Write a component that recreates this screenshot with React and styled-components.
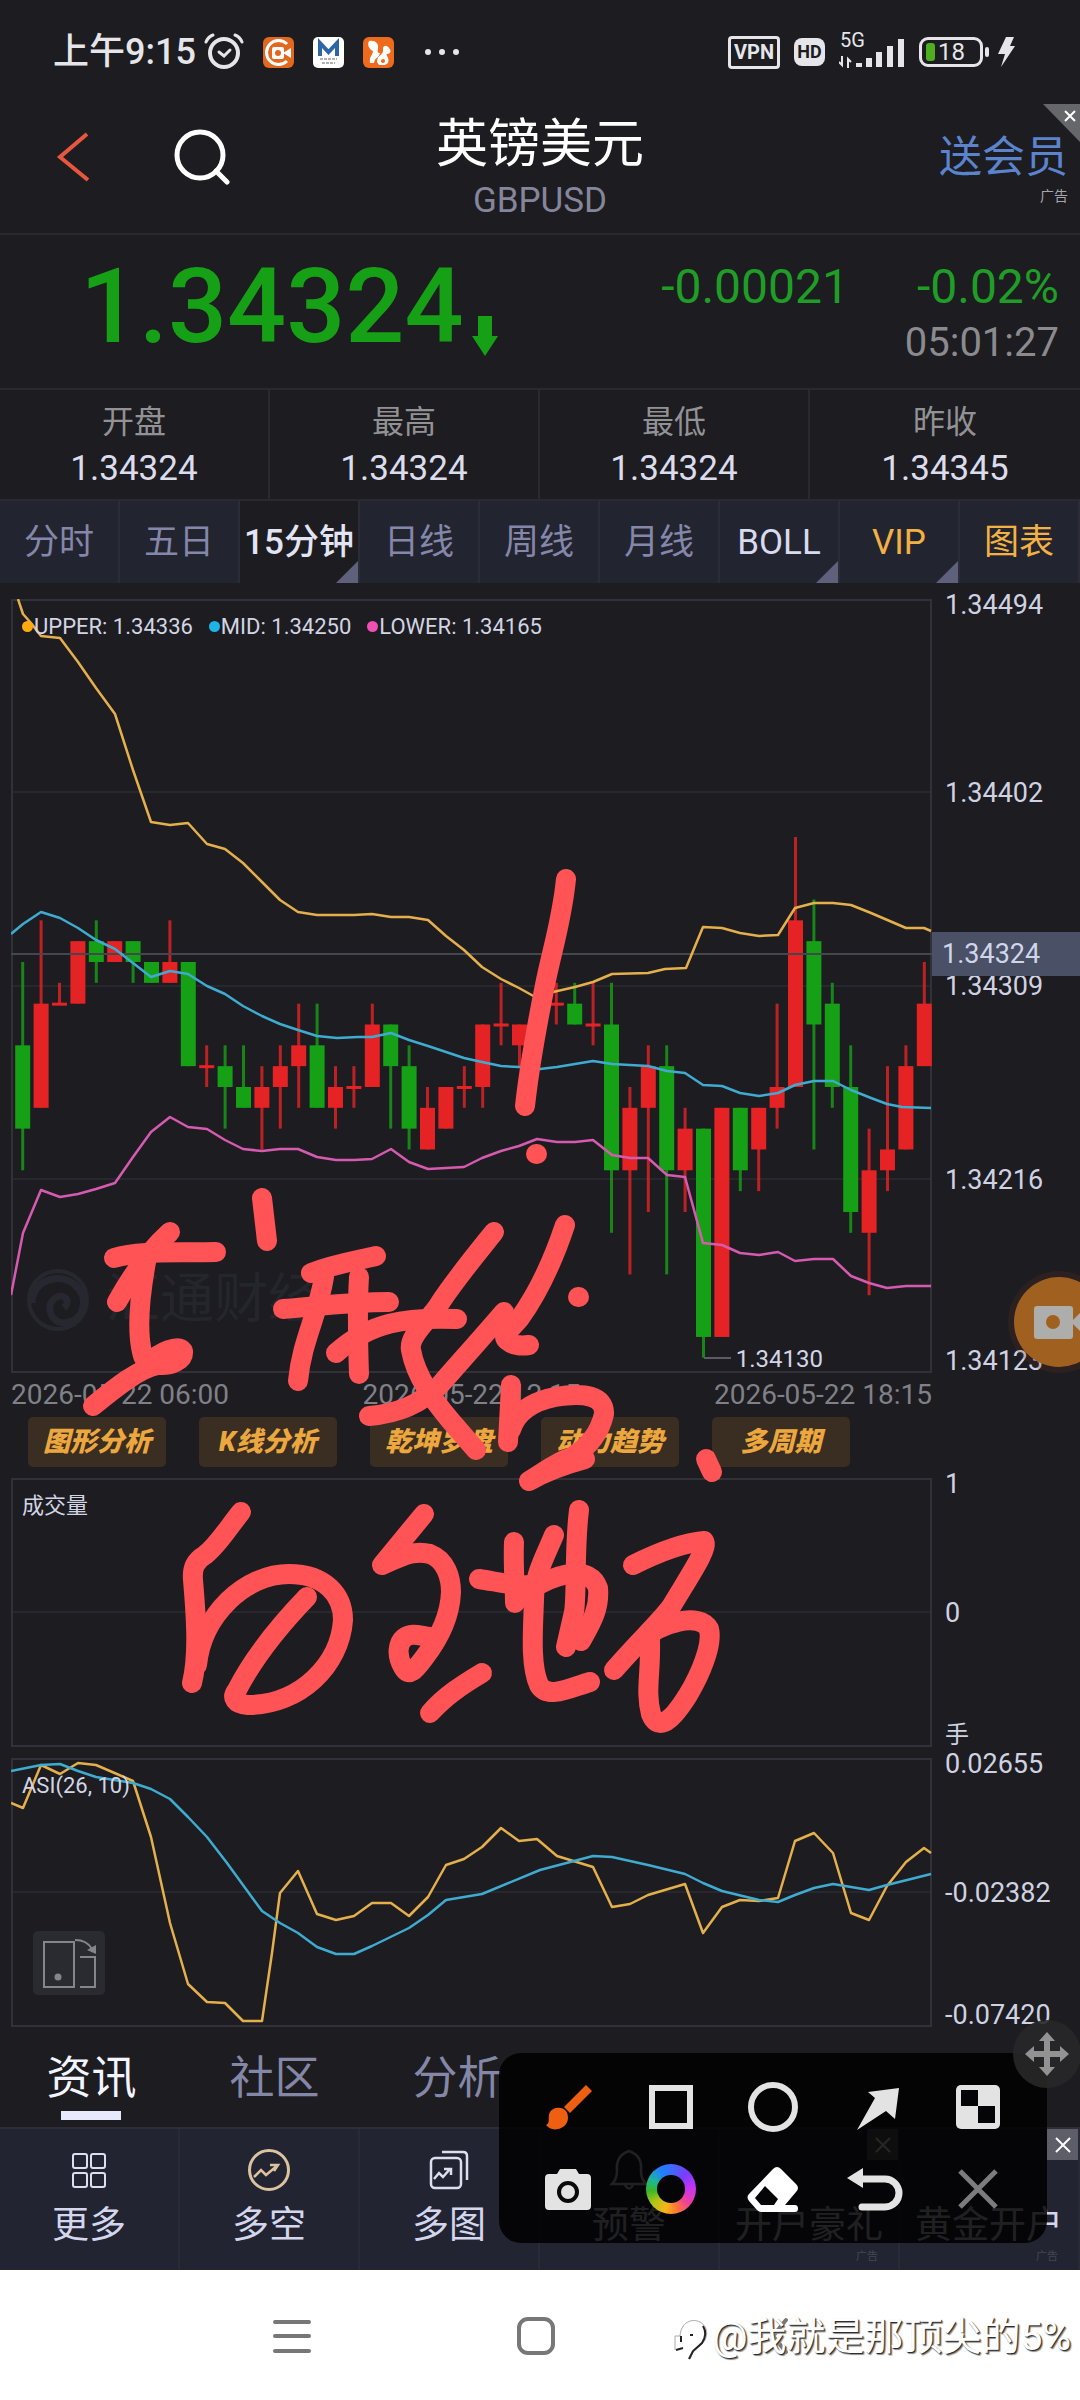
import React from 'react';
import styled, { createGlobalStyle, css } from 'styled-components';

const GlobalStyle = createGlobalStyle`
	* {
		box-sizing: border-box;
	}

	body {
		margin: 0;
		background: #fff;
		font-family: Roboto, "Noto Sans CJK SC", sans-serif;
	}

	button {
		margin: 0;
		padding: 0;
		border: none;
		background: none;
		color: inherit;
		font: inherit;
		cursor: pointer;
	}

	svg {
		display: block;
	}
`

const Page = styled.div`
	position: relative;
	overflow: hidden;
	background: #1c1c21;
	color: #d3d5e6;
`

/* status bar */

const StatusBar = styled.div`
	display: flex;
	align-items: center;
	justify-content: space-between;
	height: 104px;
	padding: 0 63px 0 53px;
	color: #e6e6ea;
`

const StatusGroup = styled.div`
	display: flex;
	align-items: center;
	gap: ${props => props.$gap}px;
`

const Clock = styled.span`
	margin-right: -11px;
	font-size: 36px;
	font-weight: 500;
	line-height: 40px;
`

const VpnBadge = styled.span`
	width: 52px;
	border: 3px solid #e6e6ea;
	border-radius: 4px;
	font-size: 20px;
	font-weight: 700;
	line-height: 27px;
	text-align: center;
`

const HdBadge = styled.span`
	width: 31px;
	border-radius: 8px;
	background: #e6e6ea;
	color: #1c1c21;
	font-size: 18px;
	font-weight: 700;
	line-height: 28px;
	text-align: center;
`

const Signal = styled.div`
	position: relative;
	width: 66px;
	height: 36px;

	span {
		position: absolute;
		top: -4px;
		left: 1px;
		font-size: 20px;
		line-height: 20px;
	}
`

const Battery = styled.div`
	position: relative;
	display: flex;
	align-items: center;
	width: 64px;
	height: 30px;
	padding-left: 4px;
	border: 3px solid #e6e6ea;
	border-radius: 9px;
	font-size: 24px;
	line-height: 24px;

	&::before {
		content: "";
		width: 9px;
		height: 18px;
		margin-right: 3px;
		border-radius: 3px;
		background: #4fae1e;
	}

	&::after {
		content: "";
		position: absolute;
		top: 7px;
		right: -9px;
		width: 4px;
		height: 10px;
		border-radius: 2px;
		background: #e6e6ea;
	}
`

/* header */

const TopBar = styled.header`
	position: relative;
	display: grid;
	grid-template-columns: 1fr auto 1fr;
	height: 131px;
	border-bottom: 2px solid #29292e;
`

const TopActions = styled.div`
	display: flex;
	align-items: center;
	gap: 82px;
	padding: 0 0 24px 56px;
`

const Title = styled.div`
	padding-top: 9px;
	text-align: center;

	h1 {
		margin: 0;
		color: #fff;
		font-size: 52px;
		font-weight: 400;
		line-height: 64px;
	}

	p {
		margin: 0;
		color: #85869b;
		font-size: 35px;
		line-height: 48px;
	}
`

const Member = styled.a`
	display: flex;
	flex-direction: column;
	align-items: flex-end;
	padding: 27px 12px 0 0;
	color: #5b84cc;
	font-size: 43px;
	line-height: 52px;
	text-decoration: none;

	small {
		margin-top: 5px;
		color: #a5a5ab;
		font-size: 14px;
		line-height: 16px;
	}
`

const CornerClose = styled.button`
	position: absolute;
	top: 0;
	right: 0;
`

/* quote */

const Quote = styled.section`
	display: flex;
	justify-content: space-between;
	height: 155px;
	padding: 0 21px 0 80px;
	border-bottom: 2px solid #29292e;
`

const Price = styled.div`
	display: flex;
	align-items: flex-start;
	color: #16a016;
	font-size: 104px;
	font-weight: 500;
	line-height: 144px;

	svg {
		margin: 81px 0 0 8px;
	}
`

const Changes = styled.div`
	display: grid;
	grid-template-columns: auto auto;
	grid-template-rows: 56px 56px;
	column-gap: 68px;
	justify-items: end;
	padding-top: 24px;
	color: #1f9d26;
	font-size: 48px;
	line-height: 56px;

	time {
		grid-column: 1 / -1;
		color: #8b8b8f;
		font-size: 40px;
	}
`

const Stats = styled.dl`
	display: grid;
	grid-template-columns: repeat(4, 1fr);
	height: 111px;
	margin: 0;
	border-bottom: 2px solid #29292e;
`

const Stat = styled.div`
	padding-top: 8px;
	border-right: 2px solid #29292e;
	text-align: center;

	&:last-child {
		border-right: none;
	}

	dt {
		color: #929295;
		font-size: 32px;
		line-height: 48px;
	}

	dd {
		margin: 0;
		color: #dcddec;
		font-size: 35px;
		line-height: 46px;
	}
`

/* period tabs */

const Periods = styled.nav`
	display: grid;
	grid-template-columns: repeat(9, 1fr);
`

const Period = styled.button`
	position: relative;
	height: 82px;
	padding-top: 2px;
	border-right: 2px solid #2b2c37;
	background: ${props => (props.$active ? '#1c1c21' : '#222430')};
	color: ${props => props.$color || '#8487a9'};
	font-size: 35px;
	font-weight: ${props => (props.$active ? 500 : 400)};
	line-height: 80px;
	white-space: nowrap;

	${props => props.$more && css`
		&::after {
			content: "";
			position: absolute;
			right: 0;
			bottom: 0;
			border-left: 22px solid transparent;
			border-bottom: 22px solid #5e607c;
		}
	`}
`

/* charts */

const Charts = styled.main`
	padding: 16px 0 0 11px;
`

const ChartRow = styled.section`
	display: grid;
	grid-template-columns: 1fr 148px;
	height: ${props => props.$height}px;
	margin-bottom: ${props => props.$after || 0}px;
`

const Plot = styled.div`
	position: relative;
	min-width: 0;

	> svg {
		width: 100%;
		height: 100%;
	}
`

const Axis = styled.div`
	position: relative;
	display: grid;
	grid-template-rows: 1fr ${props => '2fr '.repeat(props.$inner)} 1fr;
	align-items: center;
	padding-left: 13px;
	color: #d0d2e2;
	font-size: 27px;
	line-height: 12px;

	span:first-child {
		align-self: start;
	}

	span:nth-child(${props => props.$inner + 2}) {
		align-self: end;
		line-height: 24px;
	}
`

const Unit = styled.span`
	font-size: 24px;
`

const PriceTag = styled.strong`
	position: absolute;
	top: 43%;
	left: 0;
	right: 0;
	padding-left: 10px;
	background: #4a5065;
	color: #cfd6ea;
	font-size: 27px;
	font-weight: 400;
	line-height: 44px;
`

const Legend = styled.div`
	position: absolute;
	top: 15px;
	left: 11px;
	display: flex;
	gap: 16px;
	color: #d3d5e4;
	font-size: 22px;
	line-height: 26px;
`

const LegendItem = styled.span`
	&::before {
		content: "";
		display: inline-block;
		width: 11px;
		height: 11px;
		margin-right: 1px;
		border-radius: 50%;
		background: ${props => props.$dot};
		vertical-align: 2px;
	}
`

const LowMark = styled.span`
	position: absolute;
	right: 109px;
	bottom: 0;
	font-size: 24px;
	line-height: 28px;
`

const Watermark = styled.div`
	position: absolute;
	bottom: 38px;
	left: 14px;
	display: flex;
	align-items: center;
	gap: 15px;
	color: #25262c;
	font-size: 54px;
	line-height: 70px;
`

const RotateButton = styled.button`
	position: absolute;
	bottom: 32px;
	left: 22px;
	padding: 6px 8px;
	border-radius: 5px;
	background: #2a2b31;
`

const Dates = styled.div`
	display: flex;
	justify-content: space-between;
	margin-right: 148px;
	color: #808187;
	font-size: 28px;
	line-height: 44px;
`

const Tools = styled.div`
	display: flex;
	gap: 33px;
	padding: 0 0 11px 17px;
`

const Tool = styled.button`
	width: 138px;
	border-radius: 5px;
	background: #392e21;
	color: #eca73f;
	font-family: Roboto, "Noto Sans CJK SC", sans-serif;
	font-size: 27px;
	font-style: italic;
	font-weight: 900;
	line-height: 50px;
	white-space: nowrap;
`

/* bottom bars */

const Sections = styled.nav`
	display: flex;
	height: 100px;
`

const Section = styled.button`
	position: relative;
	width: 183px;
	padding-top: 3px;
	color: ${props => (props.$active ? '#f2f4ff' : '#8487a6')};
	font-size: 45px;
	line-height: 96px;

	${props => props.$active && css`
		&::after {
			content: "";
			position: absolute;
			bottom: 7px;
			left: 61px;
			width: 60px;
			height: 9px;
			background: #e6eafa;
		}
	`}
`

const BottomBar = styled.footer`
	display: grid;
	grid-template-columns: repeat(6, 1fr);
	height: 143px;
	border-top: 2px solid #2d2e36;
	background: #222432;
`

const BottomItem = styled.button`
	position: relative;
	display: flex;
	flex-direction: column;
	align-items: center;
	padding-top: 18px;
	border-right: 2px solid #282a37;
	color: #d3d6ec;
	font-size: 37px;
	line-height: 66px;
	white-space: nowrap;

	> svg,
	> i {
		width: 46px;
		height: 46px;
	}

	small {
		position: absolute;
		right: 20px;
		bottom: 6px;
		color: #454653;
		font-size: 11px;
		line-height: 14px;
	}
`

const AdClose = styled.span`
	position: absolute;
	top: 0;
	right: 0;
	display: flex;
	align-items: center;
	justify-content: center;
	width: 31px;
	height: 31px;
	background: #5d5e68;
`

const SystemNav = styled.div`
	position: relative;
	display: flex;
	align-items: center;
	justify-content: space-between;
	height: 131px;
	padding: 0 282px 0 273px;
	background: #fff;
`

const Signature = styled.div`
	position: absolute;
	right: 9px;
	bottom: 38px;
	display: flex;
	align-items: center;
	color: #fff;
	font-size: 39px;
	line-height: 52px;
	text-shadow: 1px 1px 1px #222, 2px 2px 1px #999;
`

/* floating layers */

const Ink = styled.svg`
	position: absolute;
	top: 0;
	left: 0;
	width: 100%;
	pointer-events: none;
	fill: none;
	stroke: #ff5356;
	stroke-width: 20;
	stroke-linecap: round;
	stroke-linejoin: round;
`

const RecordButton = styled.button`
	position: absolute;
	top: 1270px;
	right: -31px;
`

const Palette = styled.div`
	position: absolute;
	right: 33px;
	bottom: 158px;
	display: grid;
	grid-template-columns: repeat(5, 1fr);
	grid-template-rows: 82px 82px;
	width: 548px;
	padding: 13px 18px;
	border-radius: 22px;
	background: rgba(0, 0, 0, 0.85);
`

const PaletteButton = styled.button`
	display: flex;
	align-items: center;
	justify-content: center;
	color: #e3e3e3;

	svg {
		width: 52px;
		height: 52px;
		overflow: visible;
	}
`

const ColorRing = styled.span`
	width: 50px;
	height: 50px;
	padding: 11px;
	border-radius: 50%;
	background: conic-gradient(#3a6cff, #7a3cff 45deg, #c835f0 90deg, #f0409a 130deg, #ff7a30 165deg, #f5b41c 195deg, #b8c414 230deg, #38b828 265deg, #1cb898 295deg, #2080ff 330deg, #3a6cff);

	&::after {
		content: "";
		display: block;
		width: 28px;
		height: 28px;
		border-radius: 50%;
		background: #050507;
	}
`

const MoveHandle = styled.button`
	position: absolute;
	right: -1px;
	bottom: 313px;
	border-radius: 50%;
	background: rgba(40, 40, 41, 0.9);
`

const ORANGE = '#e5b04c';
const BLUE = '#3fabd0';
const PINK = '#d65bb0';

const UPPER = '18,599 23,614 31,623 41,636 60,638 78,662 96,688 115,714 133,770 151,822 170,825 188,823 207,844 225,849 243,863 262,882 280,900 298,912 317,915 354,915 372,914 391,917 409,917 428,920 446,936 464,950 482,967 501,979 519,988 537,998 553,992 575,987 593,982 612,974 648,973 665,969 686,968 703,927 722,928 740,933 759,936 778,935 795,908 814,903 833,903 851,905 871,913 906,928 924,928 931,931';
const MID = '11,934 23,924 41,912 60,918 78,928 96,940 115,949 133,963 151,977 170,971 188,974 207,986 225,994 243,1006 262,1016 280,1024 298,1030 317,1036 337,1038 358,1037 372,1037 391,1033 409,1040 428,1046 464,1058 482,1062 501,1066 519,1067 540,1069 557,1067 593,1061 612,1064 648,1066 667,1071 685,1073 703,1085 722,1086 740,1093 759,1096 778,1093 795,1085 814,1081 833,1081 851,1090 871,1098 887,1104 902,1107 931,1108';
const LOWER = '11,1295 23,1233 41,1190 60,1197 78,1194 96,1189 115,1183 133,1157 151,1132 170,1117 188,1127 207,1129 225,1140 243,1149 262,1151 280,1149 298,1149 317,1157 336,1160 354,1160 372,1159 391,1149 409,1162 428,1169 464,1167 482,1158 501,1151 519,1146 537,1139 557,1142 575,1142 593,1140 612,1155 630,1158 648,1158 667,1175 685,1177 703,1243 722,1245 740,1253 759,1255 778,1252 795,1261 814,1259 833,1259 851,1276 869,1283 887,1288 906,1286 931,1286';
const ASI = '11,1803 23,1808 41,1765 60,1774 78,1763 96,1765 133,1781 151,1837 170,1923 188,1984 207,2002 225,2003 243,2021 262,2021 272,1953 280,1893 298,1871 317,1914 336,1920 354,1916 372,1903 391,1903 409,1916 428,1897 446,1865 464,1859 482,1847 501,1828 519,1841 537,1839 557,1856 593,1867 612,1907 630,1904 648,1895 685,1884 703,1933 722,1907 740,1900 759,1901 778,1898 795,1841 814,1833 833,1853 851,1913 869,1920 887,1886 906,1862 924,1848 931,1853';
const ASI_AVG = '11,1771 41,1765 60,1764 78,1771 96,1777 133,1783 151,1789 170,1799 188,1817 207,1837 227,1863 262,1911 280,1923 298,1933 317,1947 336,1954 354,1954 372,1946 409,1928 428,1915 446,1900 482,1894 540,1870 593,1856 612,1857 648,1865 685,1874 703,1883 722,1891 759,1900 778,1902 795,1895 814,1888 833,1884 851,1887 869,1890 887,1885 931,1874';

// slot, up/down, high, body top, body bottom, low (in price ticks below 1.34324)
const CANDLES = [
	[0, 'd', 0, 4, 8, 10], [1, 'u', -2, 2, 7, 7], [2, 'u', 1, 2, 2, 2], [3, 'u', -1, -1, 2, 2],
	[4, 'd', -2, -1, 0, 1], [5, 'u', -1, -1, 0, 0], [6, 'd', -1, -1, 0, 1], [7, 'd', 0, 0, 1, 1],
	[8, 'u', -2, 0, 1, 1], [9, 'd', 0, 0, 5, 5], [10, 'u', 4, 5, 5, 6], [11, 'd', 4, 5, 6, 8],
	[12, 'd', 4, 6, 7, 7], [13, 'u', 5, 6, 7, 9], [14, 'u', 4, 5, 6, 8], [15, 'u', 2, 4, 5, 7],
	[16, 'd', 2, 4, 7, 7], [17, 'u', 5, 6, 7, 8], [18, 'u', 5, 6, 6, 7], [19, 'u', 2, 3, 6, 6],
	[20, 'd', 3, 3, 5, 8], [21, 'd', 4, 5, 8, 9], [22, 'u', 6, 7, 9, 9], [23, 'u', 6, 6, 8, 8],
	[24, 'u', 5, 6, 6, 7], [25, 'u', 3, 3, 6, 7], [26, 'u', 1, 3, 3, 4], [27, 'u', 3, 3, 4, 5],
	[29, 'u', 1, 2, 2, 3], [30, 'd', 1, 2, 3, 3], [31, 'u', 1, 3, 3, 4], [32, 'd', 1, 3, 10, 13],
	[33, 'u', 6, 7, 10, 15], [34, 'u', 4, 5, 7, 12], [35, 'd', 4, 5, 10, 15], [36, 'u', 7, 8, 10, 12],
	[37, 'd', 8, 8, 18, 19], [38, 'u', 7, 7, 18, 18], [39, 'd', 7, 7, 10, 11], [40, 'u', 7, 7, 9, 11],
	[41, 'u', 2, 6, 7, 8], [42, 'u', -6, -2, 6, 6], [43, 'd', -3, -1, 3, 9], [44, 'd', 1, 2, 6, 7],
	[45, 'd', 4, 6, 12, 13], [46, 'u', 8, 10, 13, 16], [47, 'u', 5, 9, 10, 11], [48, 'u', 4, 5, 9, 9],
	[49, 'u', 0, 2, 5, 5],
];

const STROKES = [
	'M566 879 C562 920 552 950 545 985 C538 1020 530 1060 525 1106',
	'M536 1154 h1',
	'M262 1198 L267 1241',
	'M170 1232 C150 1250 132 1275 117 1302',
	'M114 1258 C140 1250 175 1253 216 1252',
	'M146 1262 C140 1295 138 1320 140 1340 C142 1356 144 1362 150 1362 C160 1352 178 1344 183 1351 C184 1360 172 1366 158 1365 C140 1368 115 1388 93 1406',
	'M311 1273 C335 1264 355 1261 376 1256',
	'M283 1309 C320 1306 350 1302 389 1302',
	'M324 1277 C318 1315 302 1340 298 1381',
	'M359 1277 C357 1310 358 1345 359 1374',
	'M494 1232 C478 1252 455 1280 440 1303 C430 1320 408 1335 411 1350 C416 1378 435 1402 450 1420 L476 1450',
	'M336 1353 C370 1322 405 1317 457 1319',
	'M504 1312 C480 1340 460 1362 440 1385 C420 1405 395 1414 369 1416',
	'M565 1225 C555 1255 540 1290 520 1318 C510 1330 500 1336 508 1341 C514 1346 522 1346 529 1345',
	'M578 1297 h1',
	'M511 1385 L508 1442',
	'M511 1430 C517 1410 535 1401 555 1397 C585 1392 605 1396 604 1414 C600 1432 590 1446 572 1457 C555 1462 545 1472 529 1481 C548 1470 570 1463 585 1459',
	'M706 1459 L712 1472',
	'M241 1512 C228 1528 218 1545 205 1555 C195 1561 192 1568 193 1580 C196 1615 199 1655 192 1683',
	'M197 1665 C202 1615 245 1574 289 1574 C325 1574 343 1595 343 1620 C340 1665 300 1705 248 1705 C235 1704 231 1698 237 1690 C255 1655 280 1625 307 1597',
	'M424 1514 L382 1565 C405 1555 415 1550 430 1554 C446 1560 451 1578 451 1592 C450 1618 438 1640 424 1658 C415 1670 409 1678 403 1667 C396 1655 398 1643 404 1638 C412 1632 420 1636 430 1637',
	'M482 1673 C462 1685 445 1696 430 1713',
	'M479 1579 C500 1582 520 1588 540 1584 C560 1574 590 1565 598 1588 C600 1610 590 1625 581 1641',
	'M514 1542 C513 1565 515 1585 515 1603',
	'M554 1535 C545 1557 534 1575 534 1600 C533 1630 530 1665 539 1685 C548 1700 572 1687 590 1682',
	'M579 1510 C574 1550 577 1595 574 1612 L566 1647',
	'M633 1565 C655 1554 680 1543 704 1541 C709 1548 690 1575 671 1607 C660 1622 640 1640 614 1670',
	'M640 1642 C660 1622 700 1612 709 1629 C713 1645 700 1675 688 1695 C668 1727 657 1729 651 1714 C645 1690 651 1675 650 1640',
];

const tickY = tick => 962 + tick * 20.83;

const Candle = ({ data }) => {
	const [slot, dir, high, top, bottom, low] = data;
	const x = 22.7 + slot * 18.4;
	const y1 = tickY(top);
	const y2 = tickY(bottom);
	return (
		<g fill={dir === 'u' ? '#e62324' : '#16a016'}>
			<rect x={x - 1.5} y={tickY(high)} width="3" height={tickY(low) - tickY(high)} opacity="0.8" />
			<rect x={x - 7.5} y={top === bottom ? y1 - 1 : y1} width="15" height={Math.max(y2 - y1, 3)} />
		</g>
	);
};

const Frame = ({ top, height, lines, children }) => (
	<svg viewBox={`11 ${top} 921 ${height}`} preserveAspectRatio="none">
		{lines.map(y => <path key={y} d={`M11 ${y}H931`} stroke="#27282e" strokeWidth="2" />)}
		<rect x="12" y={top + 1} width="919" height={height - 2} fill="none" stroke="#313239" strokeWidth="2" />
		{children}
	</svg>
);

const Line = ({ points, color }) => (
	<polyline points={points} fill="none" stroke={color} strokeWidth="2.5" strokeLinejoin="round" />
);

const StatusIcons = () => (
	<StatusGroup $gap={19}>
		<Clock>上午9:15</Clock>
		<svg width="40" height="40" viewBox="0 0 40 40" fill="none" stroke="#e6e6ea" strokeWidth="4" strokeLinecap="round">
			<circle cx="20" cy="21" r="14" />
			<path d="M2 10Q4 5 9 3M38 10Q36 5 31 3" strokeWidth="3" />
			<path d="M15 20l5 4 6-6" strokeWidth="3" />
		</svg>
		<svg width="31" height="31" viewBox="0 0 31 31" fill="none">
			<rect width="31" height="31" rx="6" fill="#e2681f" />
			<path d="M24 7A12 12 0 1 0 24 24" stroke="#fff" strokeWidth="3" />
			<rect x="9" y="10" width="12" height="12" rx="2" fill="#fff" />
			<path d="M20 16l8-5v10z" fill="#fff" />
			<circle cx="15" cy="16" r="3" fill="#e2681f" />
		</svg>
		<svg width="31" height="31" viewBox="0 0 31 31" fill="none">
			<rect width="31" height="31" rx="5" fill="#fff" />
			<path d="M7 19V6l8.500 9L24 6v13" stroke="#2d65a8" strokeWidth="4" />
			<path d="M7 22h17M9 26h13" stroke="#999" strokeWidth="1.5" strokeDasharray="3 1" />
		</svg>
		<svg width="31" height="31" viewBox="0 0 31 31">
			<rect width="31" height="31" rx="6" fill="#ee6a1c" />
			<path d="M6 4c6-1 10 2 9 8-1 3 0 4 2 4-1 5-5 4-6 10H7c-1-7 3-8 3-12C6 12 4 8 6 4z" fill="#fff" />
			<path d="M14 25c0-8 7-6 6-13 0-4 4-4 6-1 3 3 1 6-2 6-2 1 3 3 1 9l-3 2h-6z" fill="#fff" />
			<circle cx="20" cy="24" r="2" fill="#ee6a1c" />
		</svg>
		<svg width="60" height="8" viewBox="0 0 60 8" fill="#e6e6ea">
			<circle cx="15" cy="4" r="3" />
			<circle cx="29" cy="4" r="3" />
			<circle cx="43" cy="4" r="3" />
		</svg>
	</StatusGroup>
);

const Header = () => (
	<TopBar>
		<TopActions>
			<button aria-label="返回">
				<svg width="36" height="50" viewBox="0 0 36 50" fill="none" stroke="#e8573d" strokeWidth="4">
					<path d="M31 2L4 25l28 23" />
				</svg>
			</button>
			<button aria-label="搜索">
				<svg width="56" height="56" viewBox="0 0 56 56" fill="none" stroke="#fff" strokeWidth="5" strokeLinecap="round">
					<circle cx="26" cy="26" r="23" />
					<path d="M42 42l11 11" />
				</svg>
			</button>
		</TopActions>
		<Title>
			<h1>英镑美元</h1>
			<p>GBPUSD</p>
		</Title>
		<Member href="#member">
			送会员
			<small>广告</small>
		</Member>
		<CornerClose aria-label="关闭">
			<svg width="37" height="38" viewBox="0 0 37 38">
				<path d="M0 0H37V38z" fill="#66676b" />
				<path d="M22 7l10 10M32 7L22 17" stroke="#fff" strokeWidth="2" />
			</svg>
		</CornerClose>
	</TopBar>
);

const PERIODS = [
	{ label: '分时' },
	{ label: '五日' },
	{ label: '15分钟', active: true, more: true, color: '#e2e4f4' },
	{ label: '日线' },
	{ label: '周线' },
	{ label: '月线' },
	{ label: 'BOLL', more: true, color: '#d8daee' },
	{ label: 'VIP', more: true, color: '#f3b144' },
	{ label: '图表', color: '#f3b144' },
];

const STATS = [['开盘', '1.34324'], ['最高', '1.34324'], ['最低', '1.34324'], ['昨收', '1.34345']];

const PriceChart = () => (
	<ChartRow $height={774}>
		<Plot>
			<Watermark>
				<svg width="66" height="66" viewBox="0 0 66 66" fill="none" stroke="#27282f">
					<circle cx="33" cy="33" r="29" strokeWidth="4" />
					<path d="M7 36C7 14 34 4 50 18s8 36-10 38c-14 0-20-16-11-24s18 2 10 9" strokeWidth="7" />
				</svg>
				汇通财经
			</Watermark>
			<Frame top={599} height={774} lines={[792, 986, 1179]}>
				{CANDLES.map(c => <Candle key={c[0]} data={c} />)}
				<path d="M11 954H932" stroke="#45474f" strokeWidth="2" />
				<path d="M704 1358H731" stroke="#5b5c63" strokeWidth="2" />
				<Line points={UPPER} color={ORANGE} />
				<Line points={MID} color={BLUE} />
				<Line points={LOWER} color={PINK} />
			</Frame>
			<Legend>
				<LegendItem $dot="#ffab10">UPPER: 1.34336</LegendItem>
				<LegendItem $dot="#1fb4e6">MID: 1.34250</LegendItem>
				<LegendItem $dot="#f050b4">LOWER: 1.34165</LegendItem>
			</Legend>
			<LowMark>1.34130</LowMark>
		</Plot>
		<Axis $inner={3}>
			<span>1.34494</span>
			<span>1.34402</span>
			<span>1.34309</span>
			<span>1.34216</span>
			<span>1.34123</span>
			<PriceTag>1.34324</PriceTag>
		</Axis>
	</ChartRow>
);

const VolumeChart = () => (
	<ChartRow $height={269} $after={11}>
		<Plot>
			<Frame top={1478} height={269} lines={[1612]} />
			<Legend>成交量</Legend>
		</Plot>
		<Axis $inner={1}>
			<span>1</span>
			<span>0</span>
			<Unit>手</Unit>
		</Axis>
	</ChartRow>
);

const AsiChart = () => (
	<ChartRow $height={269}>
		<Plot>
			<Frame top={1758} height={269} lines={[1892]}>
				<Line points={ASI} color={ORANGE} />
				<Line points={ASI_AVG} color={BLUE} />
			</Frame>
			<Legend>ASI(26, 10)</Legend>
			<RotateButton aria-label="横屏">
				<svg width="56" height="52" viewBox="0 0 56 52" fill="none" stroke="#85858a" strokeWidth="2">
					<rect x="3" y="5" width="30" height="45" />
					<path d="M39 20H54V50H39M34 3Q46 3 51 12" />
					<path d="M46 13l9-5v9z" fill="#85858a" stroke="none" />
					<circle cx="17" cy="40" r="3.5" fill="#85858a" stroke="none" />
				</svg>
			</RotateButton>
		</Plot>
		<Axis $inner={1}>
			<span>0.02655</span>
			<span>-0.02382</span>
			<span>-0.07420</span>
		</Axis>
	</ChartRow>
);

const CloseBadge = () => (
	<AdClose>
		<svg width="18" height="18" viewBox="0 0 18 18" stroke="#fff" strokeWidth="2">
			<path d="M2 2l14 14M16 2L2 16" />
		</svg>
	</AdClose>
);

const Footer = () => (
	<BottomBar>
		<BottomItem>
			<svg viewBox="0 0 46 46" fill="none" stroke="#dddff0" strokeWidth="2">
				<rect x="7" y="7" width="14" height="14" rx="2" />
				<rect x="25" y="7" width="14" height="14" rx="2" />
				<rect x="7" y="26" width="14" height="14" rx="2" />
				<rect x="25" y="26" width="14" height="14" rx="2" />
			</svg>
			更多
		</BottomItem>
		<BottomItem>
			<svg viewBox="0 0 46 46" fill="none" stroke="#dcc3a0" strokeWidth="3">
				<circle cx="23" cy="23" r="19.5" />
				<path d="M8 30l7-7 5 5L32 18M24 18h8l-4 6" strokeWidth="2.5" />
			</svg>
			多空
		</BottomItem>
		<BottomItem>
			<svg viewBox="0 0 46 46" fill="none" stroke="#dddff0" strokeWidth="2.5">
				<rect x="5" y="11" width="30" height="30" rx="4" />
				<path d="M16 5H37Q41 5 41 9V33M8 32l5-6 4 4 7-8M18 22h7v6" />
			</svg>
			多图
		</BottomItem>
		<BottomItem>
			<svg viewBox="0 0 46 46" fill="none" stroke="#dddff0" strokeWidth="2.5">
				<path d="M6 37Q11 32 11 24C10 14 14 7 23 4c9 3 13 10 12 20q0 8 5 13zM19 38q4 7 8 0" />
			</svg>
			预警
		</BottomItem>
		<BottomItem>
			<i />
			开户豪礼
			<small>广告</small>
			<CloseBadge />
		</BottomItem>
		<BottomItem>
			<i />
			黄金开户
			<small>广告</small>
			<CloseBadge />
		</BottomItem>
	</BottomBar>
);

const DrawPalette = () => (
	<Palette>
		<PaletteButton aria-label="画笔">
			<svg viewBox="0 0 52 52" fill="#ee5f12">
				<path d="M44 4L50 10 28 32 22 26z" />
				<path d="M4 44C9 42 5 36 8 31 11 26 20 25 24 30 28 36 26 44 19 47 13 50 7 48 4 44z" />
			</svg>
		</PaletteButton>
		<PaletteButton aria-label="矩形">
			<svg viewBox="0 0 52 52" fill="none" stroke="currentColor" strokeWidth="6">
				<rect x="7" y="7" width="38" height="38" />
			</svg>
		</PaletteButton>
		<PaletteButton aria-label="圆形">
			<svg viewBox="0 0 52 52" fill="none" stroke="currentColor" strokeWidth="6">
				<circle cx="26" cy="26" r="22" />
			</svg>
		</PaletteButton>
		<PaletteButton aria-label="箭头">
			<svg viewBox="0 0 52 52" fill="currentColor">
				<path d="M50 7L46 38 37 30 8 49 26 17 19 11z" />
			</svg>
		</PaletteButton>
		<PaletteButton aria-label="马赛克">
			<svg viewBox="0 0 52 52">
				<rect x="4" y="4" width="44" height="44" rx="5" fill="currentColor" />
				<path d="M9 9h17v16H9zM26 25h17v17H26z" fill="#050507" />
			</svg>
		</PaletteButton>
		<PaletteButton aria-label="截图">
			<svg viewBox="0 0 52 52" fill="currentColor">
				<path d="M7 11h8l3-5h16l3 5h8q4 0 4 4v28q0 4-4 4H7q-4 0-4-4V15q0-4 4-4z" />
				<circle cx="26" cy="29" r="9" fill="none" stroke="#0a0a0a" strokeWidth="4" />
			</svg>
		</PaletteButton>
		<PaletteButton aria-label="颜色">
			<ColorRing />
		</PaletteButton>
		<PaletteButton aria-label="橡皮擦">
			<svg viewBox="0 0 52 52" fill="#fff" fillRule="evenodd">
				<path d="M26 6Q30 2 34 6L49 21Q53 25 49 29L38 42H48Q51 42 51 45.500 51 49 48 49H14Q12 49 10 47L2 38Q-1 34 2 31zM18 23L8 35 14 42H27L31 36z" />
			</svg>
		</PaletteButton>
		<PaletteButton aria-label="撤销">
			<svg viewBox="0 0 52 52" fill="none" stroke="currentColor" strokeWidth="7" strokeLinecap="round">
				<path d="M14 16H36A14 14 0 0 1 36 44H13" />
				<path d="M-2 15L14 5V25z" fill="currentColor" stroke="none" />
			</svg>
		</PaletteButton>
		<PaletteButton aria-label="退出">
			<svg viewBox="0 0 52 52" stroke="#7c7c7c" strokeWidth="5">
				<path d="M8 8L44 44M44 8L8 44" />
			</svg>
		</PaletteButton>
	</Palette>
);

const App = () => (
	<>
		<GlobalStyle />
		<Page>
			<StatusBar>
				<StatusIcons />
				<StatusGroup $gap={14}>
					<VpnBadge>VPN</VpnBadge>
					<HdBadge>HD</HdBadge>
					<Signal>
						<span>5G</span>
						<svg width="66" height="36" viewBox="0 0 66 36" stroke="#e6e6ea" strokeWidth="2" fill="#e6e6ea">
							<path d="M3 22v9l-3-3M9 34v-9l3 3" fill="none" />
							<path d="M20 29v4M30 24v9M40 18v15M51 12v21M62 5v28" strokeWidth="6" />
						</svg>
					</Signal>
					<Battery>18</Battery>
					<svg width="20" height="30" viewBox="0 0 20 30" fill="#e6e6ea">
						<path d="M9 0h8l-4 9h5L4 30l4-13H1z" />
					</svg>
				</StatusGroup>
			</StatusBar>
			<Header />
			<Quote>
				<Price>
					1.34324
					<svg width="26" height="40" viewBox="0 0 26 40" fill="#16a016">
						<path d="M6 0H20V20H26L13 40 0 20H6z" />
					</svg>
				</Price>
				<Changes>
					<span>-0.00021</span>
					<span>-0.02%</span>
					<time>05:01:27</time>
				</Changes>
			</Quote>
			<Stats>
				{STATS.map(([label, value]) => (
					<Stat key={label}>
						<dt>{label}</dt>
						<dd>{value}</dd>
					</Stat>
				))}
			</Stats>
			<Periods>
				{PERIODS.map(p => (
					<Period key={p.label} $active={p.active} $more={p.more} $color={p.color}>{p.label}</Period>
				))}
			</Periods>
			<Charts>
				<PriceChart />
				<Dates>
					<span>2026-05-22 06:00</span>
					<span>2026-05-22 12:15</span>
					<span>2026-05-22 18:15</span>
				</Dates>
				<Tools>
					{['图形分析', 'K线分析', '乾坤罗盘', '动力趋势', '多周期'].map(t => <Tool key={t}>{t}</Tool>)}
				</Tools>
				<VolumeChart />
				<AsiChart />
			</Charts>
			<Sections>
				<Section $active>资讯</Section>
				<Section>社区</Section>
				<Section>分析</Section>
			</Sections>
			<Footer />
			<SystemNav>
				<button aria-label="菜单">
					<svg width="38" height="38" viewBox="0 0 38 38" stroke="#777" strokeWidth="4" strokeLinecap="round">
						<path d="M2 5H36M2 19H36M2 34H36" />
					</svg>
				</button>
				<button aria-label="主页">
					<svg width="38" height="38" viewBox="0 0 38 38" fill="none" stroke="#777" strokeWidth="4">
						<rect x="2" y="2" width="34" height="34" rx="9" />
					</svg>
				</button>
				<button aria-label="后退">
					<svg width="38" height="38" viewBox="0 0 38 38" fill="none" stroke="#777" strokeWidth="4" strokeLinecap="round">
						<path d="M26 3L13 19l13 16" />
					</svg>
				</button>
				<Signature>
					<svg width="40" height="46" viewBox="0 0 40 46" fill="none" strokeWidth="2">
						<path d="M3 36V22h5C9 8 20 4 28 8c9 5 8 16 2 22l-9 8-3 7" stroke="#aaa" strokeWidth="1" />
						<path d="M31 12q5 8-1 17l-9 8-4 8M4 36l7-2M18 21h3M9 22v6" stroke="#222" />
					</svg>
					@我就是那顶尖的5%
				</Signature>
			</SystemNav>
			<RecordButton aria-label="录屏">
				<svg width="104" height="104" viewBox="0 0 104 104">
					<circle cx="52" cy="52" r="51" fill="rgba(110, 50, 30, 0.22)" />
					<circle cx="52" cy="52" r="45" fill="#a0601f" />
					<rect x="27" y="36" width="39" height="33" rx="3" fill="#adadab" />
					<path d="M64 52l14-14v28z" fill="#adadab" />
					<circle cx="46" cy="52" r="7" fill="#a0601f" />
				</svg>
			</RecordButton>
			<Ink viewBox="0 0 1080 2400">
				{STROKES.map(d => <path key={d} d={d} />)}
			</Ink>
			<DrawPalette />
			<MoveHandle aria-label="移动">
				<svg width="68" height="68" viewBox="0 0 68 68" fill="#929292">
					<path d="M34 12l8 9h-5v10h10v-5l9 8-9 8v-5H37v10h5l-8 9-8-9h5V37H21v5l-9-8 9-8v5h10V21h-5z" />
				</svg>
			</MoveHandle>
		</Page>
	</>
);

export default App;
